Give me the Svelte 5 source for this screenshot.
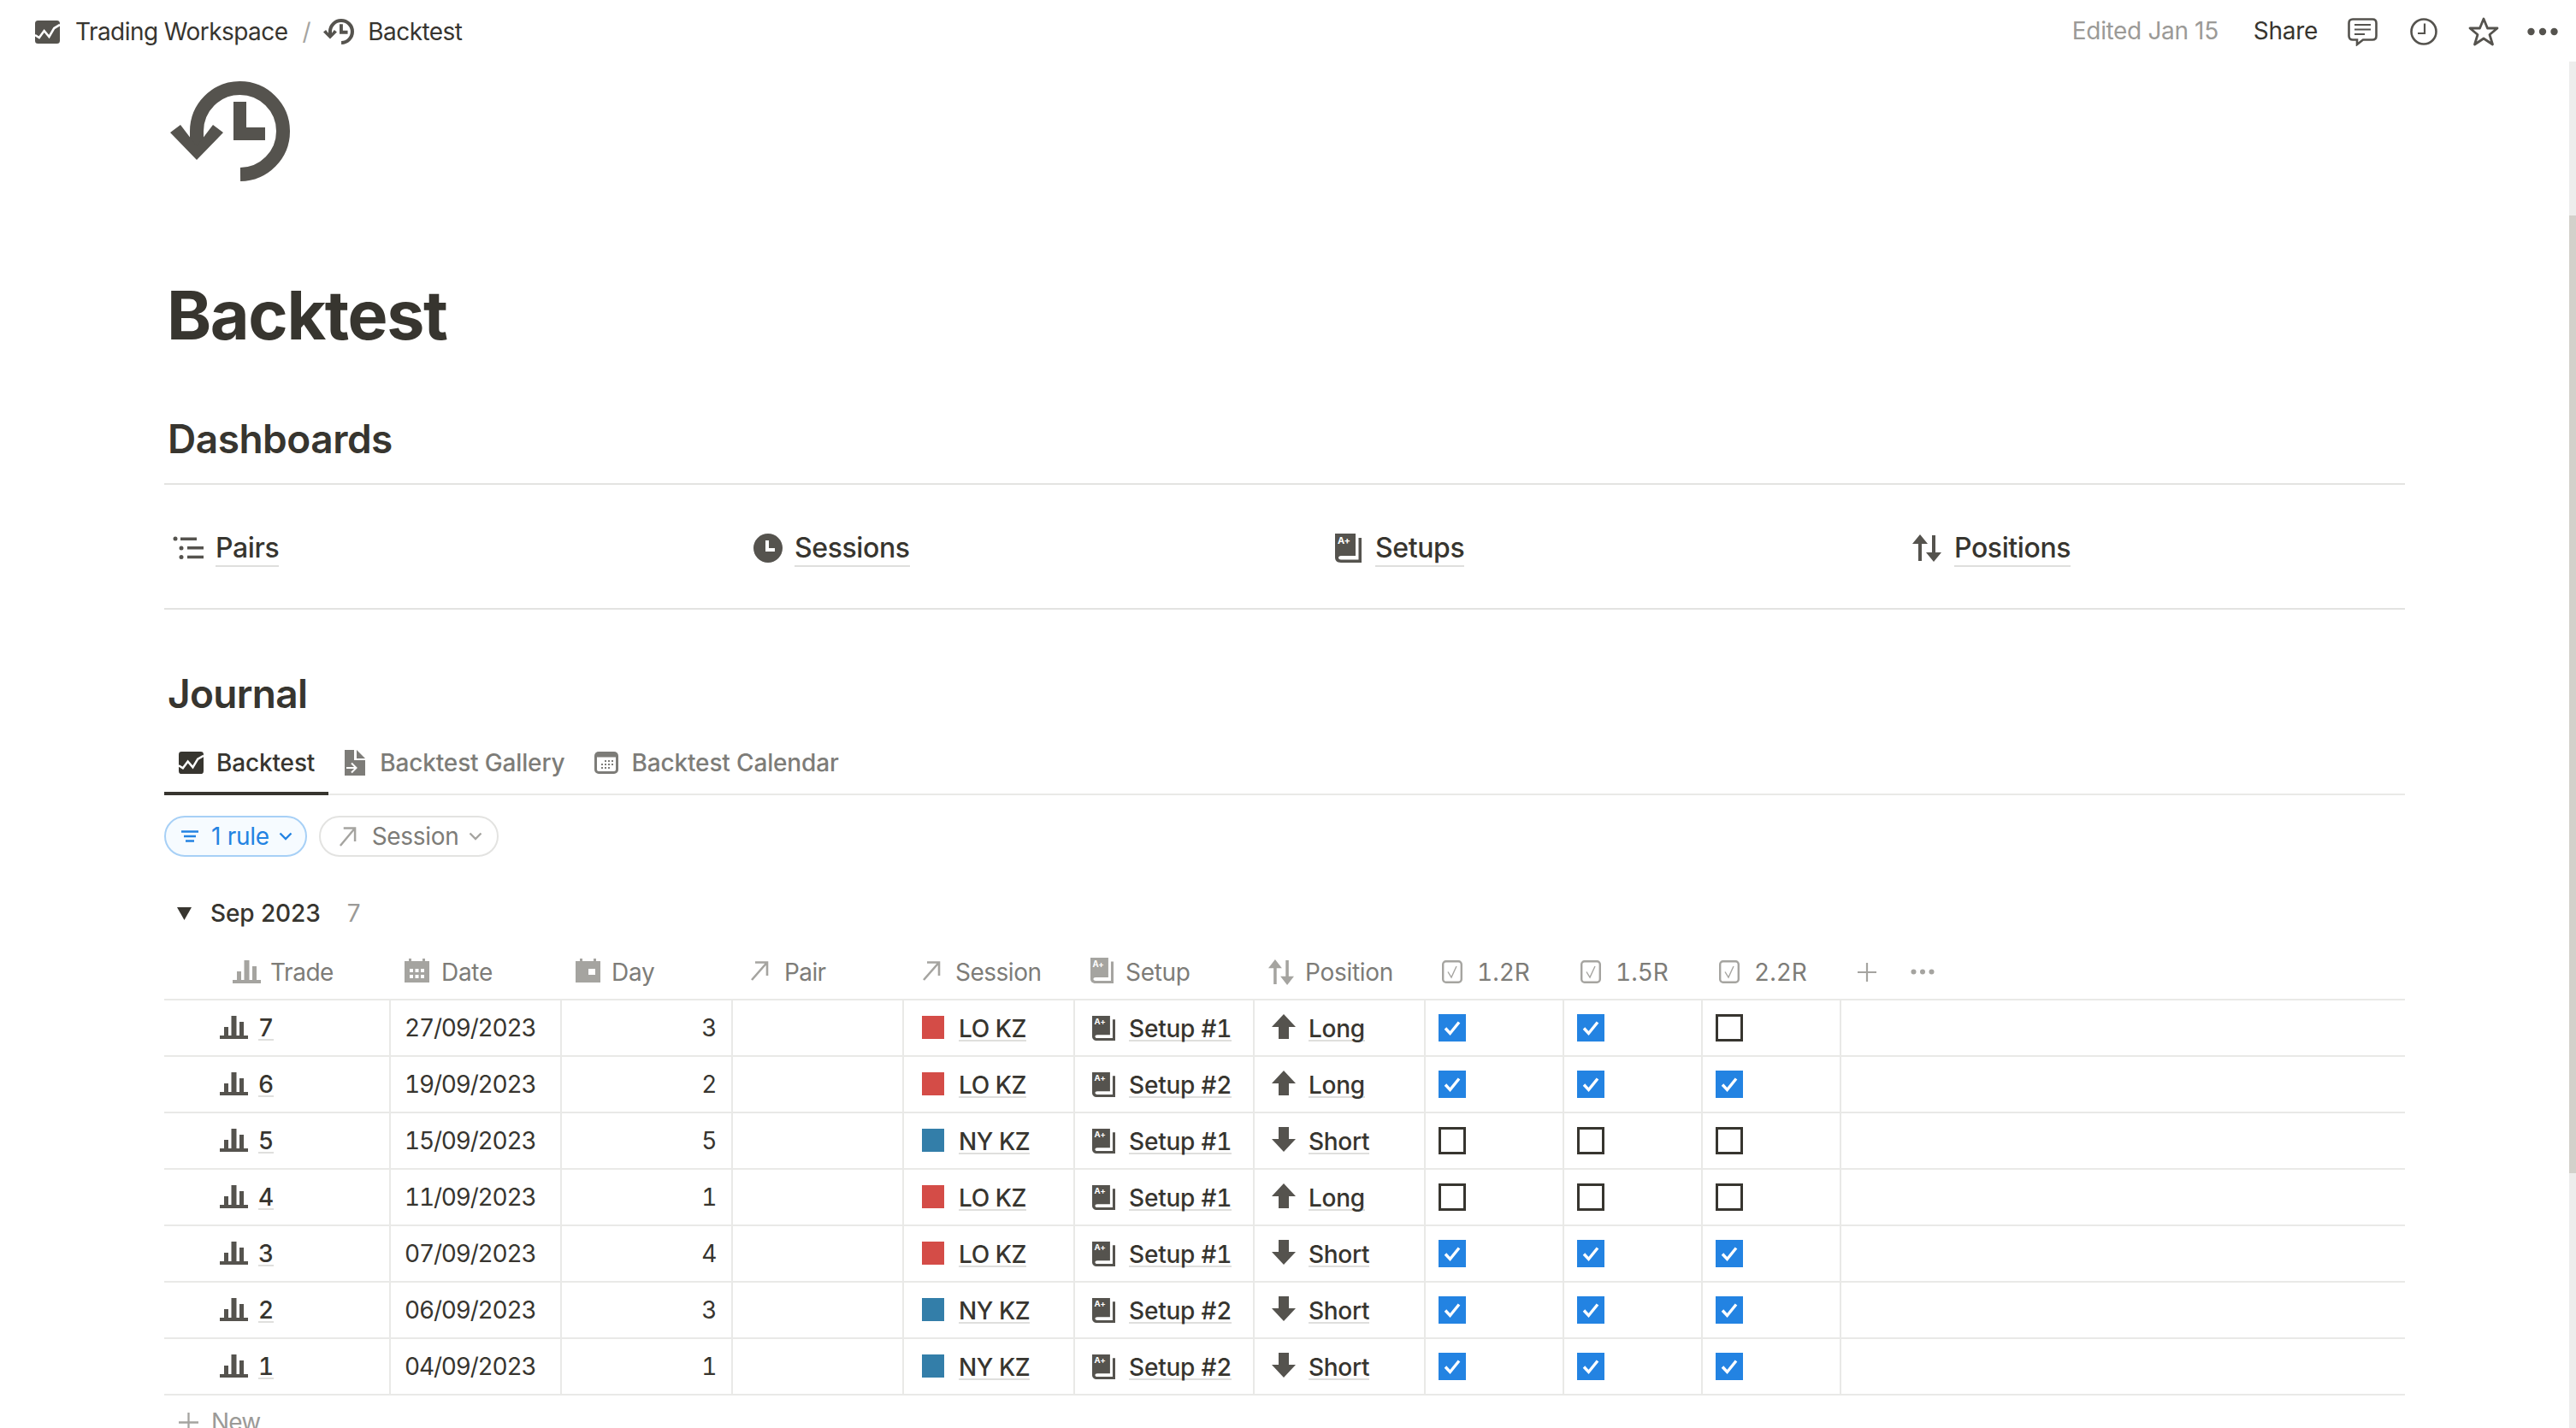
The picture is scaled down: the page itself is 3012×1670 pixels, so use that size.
<script>
  const rows = [
    { n: 7, date: '27/09/2023', day: 3, s: 'LO', setup: 1, long: true, c: [1, 1, 0] },
    { n: 6, date: '19/09/2023', day: 2, s: 'LO', setup: 2, long: true, c: [1, 1, 1] },
    { n: 5, date: '15/09/2023', day: 5, s: 'NY', setup: 1, long: false, c: [0, 0, 0] },
    { n: 4, date: '11/09/2023', day: 1, s: 'LO', setup: 1, long: true, c: [0, 0, 0] },
    { n: 3, date: '07/09/2023', day: 4, s: 'LO', setup: 1, long: false, c: [1, 1, 1] },
    { n: 2, date: '06/09/2023', day: 3, s: 'NY', setup: 2, long: false, c: [1, 1, 1] },
    { n: 1, date: '04/09/2023', day: 1, s: 'NY', setup: 2, long: false, c: [1, 1, 1] }
  ];
  const rs = ['1.2R', '1.5R', '2.2R'];
</script>

{#snippet chart(cls)}
  <svg class={cls} viewBox="0 0 30 27" preserveAspectRatio="none"><rect width="30" height="27" rx="3.5" fill="currentColor"/><polyline points="0,17 5,20 11,12 17,19 23,9 30,5" fill="none" stroke="#fff" stroke-width="2.6"/></svg>
{/snippet}
{#snippet history(cls)}
  <svg class={cls} viewBox="0 0 140 117" preserveAspectRatio="none"><path d="M82 109A50.5 50.5 0 1 0 31 58.5V82" fill="none" stroke="currentColor" stroke-width="16"/><polygon points="0,60 12,51 31,76 50,51 62,60 31,92" fill="currentColor"/><polygon points="74,24 89,24 89,54 111,54 111,69 74,69" fill="currentColor"/></svg>
{/snippet}
{#snippet book(cls)}
  <svg class={cls} viewBox="0 0 31 34" preserveAspectRatio="none"><path d="M0 0H24V26H7C3 26 3 30.500 7 30.500H27.500V5H31V34H7C2 34 0 31 0 28Z" fill="currentColor"/><text x="3" y="12" font-size="11" font-weight="700" font-family="Inter, sans-serif" fill="#fff">A+</text></svg>
{/snippet}
{#snippet updown(cls)}
  <svg class={cls} viewBox="0 0 34 32" preserveAspectRatio="none"><polygon points="0,11 9,0 18,11 11,11 11,31 7,31 7,11" fill="currentColor"/><polygon points="16,21 23,21 23,1 27,1 27,21 34,21 25,32" fill="currentColor"/></svg>
{/snippet}
{#snippet bars(cls)}
  <svg class={cls} viewBox="0 0 33 27" preserveAspectRatio="none"><rect y="23" width="33" height="4" fill="currentColor"/><rect x="5" y="13" width="5" height="10" fill="currentColor"/><rect x="13.500" y="0" width="6" height="23" fill="currentColor"/><rect x="23" y="7" width="5" height="16" fill="currentColor"/></svg>
{/snippet}
{#snippet arrowNE(cls)}
  <svg class={cls} viewBox="0 0 22 24" preserveAspectRatio="none"><path d="M2 23L19.500 3M6 2.500H20V18" fill="none" stroke="currentColor" stroke-width="2.600"/></svg>
{/snippet}
{#snippet checkIcon(cls)}
  <svg class={cls} viewBox="0 0 24 27" preserveAspectRatio="none"><rect x="1.200" y="1.200" width="21.600" height="24.600" rx="3.500" fill="none" stroke="currentColor" stroke-width="2.400"/><path d="M7 13.500L11 20L17 7" fill="none" stroke="currentColor" stroke-width="1.400"/></svg>
{/snippet}
{#snippet chevron(cls)}
  <svg class={cls} viewBox="0 0 16 10" preserveAspectRatio="none"><path d="M1.500 1.500L8 8L14.500 1.500" fill="none" stroke="currentColor" stroke-width="2.400"/></svg>
{/snippet}
{#snippet plus(cls)}
  <svg class={cls} viewBox="0 0 22 22"><path d="M11 0V22M0 11H22" fill="none" stroke="currentColor" stroke-width="2.200"/></svg>
{/snippet}

<div class="app">
  <header class="topbar">
    <div class="crumbs">
      {@render chart('ic-crumb')}
      <span class="crumb-text first">Trading Workspace</span>
      <span class="slash">/</span>
      {@render history('ic-crumb-h')}
      <span class="crumb-text">Backtest</span>
    </div>
    <div class="actions">
      <span class="edited">Edited Jan 15</span>
      <span class="share">Share</span>
      <svg class="ic-comment" viewBox="0 0 35 33" preserveAspectRatio="none"><path d="M6 1.500H29C32 1.500 33.500 3 33.500 6V21C33.500 24 32 25.500 29 25.500H18L11 31V25.500H6C3 25.500 1.500 24 1.500 21V6C1.500 3 3 1.500 6 1.500Z" fill="none" stroke="currentColor" stroke-width="2.600"/><path d="M8 8H27M8 13.500H27M8 19H20" stroke="currentColor" stroke-width="2"/></svg>
      <svg class="ic-clock" viewBox="0 0 32 32"><circle cx="16" cy="16" r="14.500" fill="none" stroke="currentColor" stroke-width="2.600"/><path d="M17 6.500V18H9" fill="none" stroke="currentColor" stroke-width="2.200"/></svg>
      <svg class="ic-star" viewBox="0 0 36 34" preserveAspectRatio="none"><polygon points="18,2 22.500,13 34,13 25,20.500 28.500,32 18,25 7.500,32 11,20.500 2,13 13.500,13" fill="none" stroke="currentColor" stroke-width="2.800" stroke-linejoin="round"/></svg>
      <svg class="ic-dots" viewBox="0 0 36 10"><circle cx="4.500" cy="5" r="4.200" fill="currentColor"/><circle cx="18" cy="5" r="4.200" fill="currentColor"/><circle cx="31.500" cy="5" r="4.200" fill="currentColor"/></svg>
    </div>
  </header>

  <main class="page">
    {@render history('page-icon')}
    <h1>Backtest</h1>
    <h2 class="dash">Dashboards</h2>

    <div class="links">
      <div class="link">
        <svg class="ic-list" viewBox="0 0 36 27" preserveAspectRatio="none"><circle cx="3" cy="3" r="2.500" fill="currentColor"/><circle cx="10" cy="14" r="2.500" fill="currentColor"/><circle cx="10" cy="24.500" r="2.500" fill="currentColor"/><rect x="9" y="1.500" width="19" height="3.500" fill="currentColor"/><rect x="17" y="12" width="19" height="3.500" fill="currentColor"/><rect x="17" y="22.700" width="19" height="3.500" fill="currentColor"/></svg>
        <span class="u">Pairs</span>
      </div>
      <div class="link">
        <svg class="ic-fclock" viewBox="0 0 34 34"><circle cx="17" cy="17" r="17" fill="currentColor"/><path d="M16 8V19H25" fill="none" stroke="#fff" stroke-width="4"/></svg>
        <span class="u">Sessions</span>
      </div>
      <div class="link">
        {@render book('ic-book-lg')}
        <span class="u">Setups</span>
      </div>
      <div class="link">
        {@render updown('ic-ud-lg')}
        <span class="u">Positions</span>
      </div>
    </div>

    <h2 class="journal">Journal</h2>

    <nav class="tabs">
      <div class="tab active">
        {@render chart('ic-tab')}
        <span>Backtest</span>
      </div>
      <div class="tab second">
        <svg class="ic-gallery" viewBox="0 0 24 30"><path d="M0 0H11V12H24V30H0Z" fill="currentColor"/><polygon points="14,0 24,10 14,10" fill="currentColor"/><path d="M2 21H12M8 15.500L13.500 21L8 26.500" fill="none" stroke="#fff" stroke-width="2"/></svg>
        <span>Backtest Gallery</span>
      </div>
      <div class="tab third">
        <svg class="ic-cal" viewBox="0 0 28 26"><rect x="1.500" y="1.500" width="25" height="23" rx="3.500" fill="#fff" stroke="currentColor" stroke-width="3"/><rect x="1.500" y="1.500" width="25" height="5" fill="currentColor"/><g fill="currentColor"><rect x="12" y="10" width="2" height="2"/><rect x="16" y="10" width="2" height="2"/><rect x="20" y="10" width="2" height="2"/><rect x="8" y="14" width="2" height="2"/><rect x="12" y="14" width="2" height="2"/><rect x="16" y="14" width="2" height="2"/><rect x="20" y="14" width="2" height="2"/><rect x="8" y="18" width="2" height="2"/><rect x="12" y="18" width="2" height="2"/><rect x="16" y="18" width="2" height="2"/></g></svg>
        <span>Backtest Calendar</span>
      </div>
    </nav>

    <div class="filters">
      <div class="chip rule">
        <svg class="ic-filter" viewBox="0 0 20 14" preserveAspectRatio="none"><path d="M0 1.500H20M3 7H17M5 12.500H15" stroke="currentColor" stroke-width="2.400"/></svg>
        <span>1 rule</span>
        {@render chevron('ic-chev')}
      </div>
      <div class="chip session">
        {@render arrowNE('ic-arrow-chip')}
        <span>Session</span>
        {@render chevron('ic-chev grey')}
      </div>
    </div>

    <div class="group">
      <svg class="ic-tri" viewBox="0 0 17 15" preserveAspectRatio="none"><polygon points="0,0 17,0 8.500,15" fill="currentColor"/></svg>
      <span class="g-title">Sep 2023</span>
      <span class="g-count">7</span>
    </div>

    <div class="table">
      <div class="grid head">
        <div class="th t-trade">{@render bars('ic-th-bars')}<span>Trade</span></div>
        <div class="th t-date">
          <svg class="ic-th-date" viewBox="0 0 29 28"><path d="M0 3H5V0H8V3H21V0H24V3H29V28H0Z" fill="currentColor"/><g fill="#fff"><rect x="6" y="12" width="4" height="4"/><rect x="12.500" y="12" width="4" height="4"/><rect x="19" y="12" width="4" height="4"/><rect x="6" y="19" width="4" height="4"/><rect x="12.500" y="19" width="4" height="4"/><rect x="19" y="19" width="4" height="4"/></g></svg>
          <span>Date</span>
        </div>
        <div class="th t-day">
          <svg class="ic-th-date" viewBox="0 0 29 28"><path d="M0 3H5V0H8V3H21V0H24V3H29V28H0Z" fill="currentColor"/><rect x="15" y="12" width="8" height="7" fill="#fff"/></svg>
          <span>Day</span>
        </div>
        <div class="th t-pair">{@render arrowNE('ic-th-arrow')}<span>Pair</span></div>
        <div class="th t-session">{@render arrowNE('ic-th-arrow')}<span>Session</span></div>
        <div class="th t-setup">{@render book('ic-th-book')}<span>Setup</span></div>
        <div class="th t-position">{@render updown('ic-th-ud')}<span>Position</span></div>
        {#each rs as r}
          <div class="th t-r">{@render checkIcon('ic-th-check')}<span>{r}</span></div>
        {/each}
        <div class="th t-add">
          {@render plus('ic-th-plus')}
          <svg class="ic-th-dots" viewBox="0 0 28 7"><circle cx="3.500" cy="3.500" r="3" fill="currentColor"/><circle cx="14" cy="3.500" r="3" fill="currentColor"/><circle cx="24.500" cy="3.500" r="3" fill="currentColor"/></svg>
        </div>
      </div>

      {#each rows as row}
        <div class="grid row">
          <div class="td c-trade">{@render bars('ic-bars')}<span class="u">{row.n}</span></div>
          <div class="td c-date">{row.date}</div>
          <div class="td c-day">{row.day}</div>
          <div class="td"></div>
          <div class="td c-session">
            <span class="swatch" class:red={row.s === 'LO'} class:blue={row.s === 'NY'}></span>
            <span class="u">{row.s} KZ</span>
          </div>
          <div class="td c-setup">{@render book('ic-book')}<span class="u">Setup #{row.setup}</span></div>
          <div class="td c-pos">
            <svg class="ic-dir" class:down={!row.long} viewBox="0 0 28 29"><polygon points="14,0 28,15 20,15 20,29 8,29 8,15 0,15" fill="currentColor"/></svg>
            <span class="u">{row.long ? 'Long' : 'Short'}</span>
          </div>
          {#each row.c as on}
            <div class="td c-check">
              {#if on}
                <span class="box on"><svg viewBox="0 0 32 32"><path d="M8 16.500L13.500 22.500L24 9.500" fill="none" stroke="#fff" stroke-width="3.400"/></svg></span>
              {:else}
                <span class="box"></span>
              {/if}
            </div>
          {/each}
          <div class="td last"></div>
        </div>
      {/each}
    </div>

    <div class="new">
      {@render plus('ic-new')}
      <span>New</span>
    </div>
  </main>

  <div class="scrollbar"><div class="thumb"></div></div>
</div>

<style>
  :global(body) { margin: 0; background: #fff; }
  .app {
    position: relative;
    width: 3012px;
    height: 1670px;
    overflow: hidden;
    background: #fff;
    color: #37352f;
    font-family: Inter, "Liberation Sans", sans-serif;
    font-size: 28px;
    letter-spacing: -0.3px;
  }
  svg { display: block; flex: none; color: #55534e; }

  .topbar { height: 74px; display: flex; justify-content: space-between; align-items: center; padding: 0 21px 0 41px; box-sizing: border-box; }
  .crumbs { display: flex; align-items: center; }
  .ic-crumb { width: 29px; height: 27px; }
  .ic-crumb-h { width: 36px; height: 30px; }
  .crumb-text { line-height: 40px; letter-spacing: -0.55px; }
  .crumb-text.first { margin-left: 18px; }
  .slash { margin: 0 15px 0 17px; color: #a5a4a0; }
  .ic-crumb-h + .crumb-text { margin-left: 16px; }
  .actions { display: flex; align-items: center; }
  .edited { color: #9b9a97; margin-right: 41px; margin-bottom: 3px; letter-spacing: -0.35px; }
  .share { margin-right: 35px; margin-bottom: 3px; }
  .ic-comment { width: 35px; height: 33px; margin-right: 38px; }
  .ic-clock { width: 32px; height: 32px; margin-right: 36px; }
  .ic-star { width: 36px; height: 34px; margin-right: 33px; }
  .ic-dots { width: 36px; height: 10px; }

  .page { padding: 0 200px 0 192px; }
  .page-icon { width: 140px; height: 117px; margin: 21px 0 0 7px; }
  h1 { margin: 108px 0 0 3px; font-size: 79px; line-height: 96px; font-weight: 700; letter-spacing: -1.4px; }
  h2 { margin: 0; font-size: 46px; line-height: 60px; font-weight: 600; letter-spacing: -0.5px; padding-left: 4px; }
  .dash { margin-top: 67px; padding-bottom: 22px; border-bottom: 2px solid #e3e3e1; }

  .links { display: grid; grid-template-columns: repeat(4, 678px); height: 144px; box-sizing: content-box; padding: 0 0 0 10px; border-bottom: 2px solid #e3e3e1; }
  .link { display: flex; align-items: flex-start; gap: 14px; padding-top: 54px; font-size: 32px; font-weight: 500; line-height: 40px; letter-spacing: -0.4px; }
  .u { border-bottom: 2px solid #dfdfdd; }
  .ic-list { width: 36px; height: 27px; margin-top: 6px; }
  .ic-fclock { width: 34px; height: 34px; margin-top: 3px; margin-left: 1px; }
  .ic-book-lg { width: 31px; height: 34px; margin-top: 3px; margin-left: 3px; margin-right: 2px; }
  .ic-ud-lg { width: 34px; height: 32px; margin-top: 4px; margin-right: 1px; }

  .journal { margin-top: 68px; letter-spacing: -0.7px; }

  .tabs { display: flex; align-items: flex-end; height: 89px; box-sizing: border-box; border-bottom: 2px solid #e9e9e7; }
  .tab { display: flex; align-items: center; height: 76px; box-sizing: border-box; padding: 4px 16px 0; margin-bottom: -2px; border-bottom: 4px solid transparent; gap: 15px; color: #7d7c78; font-weight: 500; letter-spacing: -0.15px; }
  .tab svg { color: #7d7c78; }
  .tab.active { color: #37352f; border-bottom-color: #37352f; padding-left: 17px; }
  .tab.active svg { color: #37352f; }
  .tab.second { margin-left: 3px; gap: 17px; }
  .tab.third { margin-left: 3px; }
  .ic-tab { width: 29px; height: 26px; }
  .ic-gallery { width: 24px; height: 30px; }
  .ic-cal { width: 28px; height: 26px; }

  .filters { display: flex; gap: 14px; margin-top: 24px; }
  .chip { display: flex; align-items: center; height: 48px; box-sizing: border-box; border-radius: 24px; border: 2px solid #e3e3e1; color: #7d7c78; }
  .chip.rule { border-color: #a7d0f6; background: #f6fbff; color: #2383e2; padding: 0 15px 0 18px; }
  .chip.session { padding: 0 17px 0 21px; }
  .ic-filter { width: 20px; height: 14px; color: #2383e2; margin-right: 15px; }
  .ic-chev { width: 16px; height: 10px; color: #2383e2; margin-left: 11px; }
  .ic-chev.grey { color: #a5a4a0; }
  .ic-arrow-chip { width: 21px; height: 24px; color: #a5a4a0; margin-right: 18px; }

  .group { display: flex; align-items: center; height: 50px; margin-top: 41px; padding-left: 15px; }
  .ic-tri { width: 17px; height: 15px; color: #37352f; margin-right: 22px; }
  .g-title { font-weight: 500; letter-spacing: -0.1px; }
  .g-count { margin-left: 31px; color: #9b9a97; }

  .grid { display: grid; grid-template-columns: 265px 200px 200px 200px 200px 210px 200px 162px 162px 162px 1fr; }
  .head { height: 77px; box-sizing: border-box; padding-top: 12px; border-bottom: 2px solid #e9e9e7; }
  .th { display: flex; align-items: center; color: #7d7c78; }
  .th svg { color: #a5a4a0; }
  .t-trade { padding-left: 80px; gap: 11px; letter-spacing: -0.45px; }
  .t-date { padding-left: 16px; gap: 14px; }
  .t-day { padding-left: 16px; gap: 13px; }
  .t-pair { padding-left: 20px; gap: 18px; letter-spacing: -0.6px; }
  .t-session { padding-left: 21px; gap: 17px; letter-spacing: -0.5px; }
  .t-setup { padding-left: 18px; gap: 14px; }
  .t-position { padding-left: 16px; gap: 13px; }
  .t-r { padding-left: 19px; gap: 17px; font-variant-numeric: tabular-nums; letter-spacing: 0; }
  .t-add { padding-left: 19px; gap: 40px; }
  .ic-th-bars { width: 33px; height: 27px; }
  .ic-th-date { width: 29px; height: 28px; margin-top: -4px; }
  .ic-th-arrow { width: 22px; height: 24px; margin-top: -4px; }
  .ic-th-book { width: 27px; height: 30px; margin-top: -4px; }
  .ic-th-ud { width: 30px; height: 30px; }
  .ic-th-check { width: 24px; height: 27px; }
  .ic-th-plus { width: 22px; height: 22px; }
  .ic-th-dots { width: 28px; height: 7px; }

  .row { height: 66px; box-sizing: border-box; border-bottom: 2px solid #e9e9e7; }
  .td { display: flex; align-items: center; border-right: 2px solid #e9e9e7; min-width: 0; font-weight: 400; }
  .td.last { border-right: 0; }
  .c-trade { padding-left: 65px; gap: 12px; font-weight: 500; font-variant-numeric: tabular-nums; }
  .c-trade .u { line-height: 26px; margin-top: 2px; }
  .ic-bars { width: 33px; height: 27px; margin-top: -2px; }
  .c-date { padding-left: 16px; font-variant-numeric: tabular-nums; letter-spacing: -1.2px; }
  .c-day { justify-content: flex-end; padding-right: 17px; font-variant-numeric: tabular-nums; }
  .c-session { padding-left: 21px; gap: 17px; font-weight: 500; letter-spacing: -0.4px; }
  .swatch { width: 26px; height: 27px; flex: none; margin-top: -1px; }
  .swatch.red { background: #d44c47; }
  .swatch.blue { background: #337ea9; }
  .c-session .u, .c-setup .u, .c-pos .u { line-height: 26px; margin-top: 4px; }
  .c-setup { padding-left: 20px; gap: 16px; font-weight: 500; font-variant-numeric: tabular-nums; letter-spacing: -0.2px; }
  .ic-book { width: 27px; height: 29px; }
  .c-pos { padding-left: 20px; gap: 15px; font-weight: 500; }
  .ic-dir { width: 28px; height: 29px; margin-top: -3px; }
  .ic-dir.down { transform: rotate(180deg); }
  .c-check { padding-left: 15px; }
  .box { display: block; width: 32px; height: 32px; box-sizing: border-box; border: 3px solid #37352f; margin-top: -1px; }
  .box.on { background: #2383e2; border: 0; }
  .box.on svg { width: 32px; height: 32px; }

  .new { display: flex; align-items: center; height: 62px; padding-left: 17px; gap: 15px; color: #9b9a97; letter-spacing: -0.8px; }
  .ic-new { width: 23px; height: 23px; color: #a5a4a0; }

  .scrollbar { position: absolute; right: 0; top: 72px; bottom: 0; width: 8px; background: #ededec; }
  .thumb { margin-top: 180px; height: 1120px; background: #d3d1cb; }
</style>
